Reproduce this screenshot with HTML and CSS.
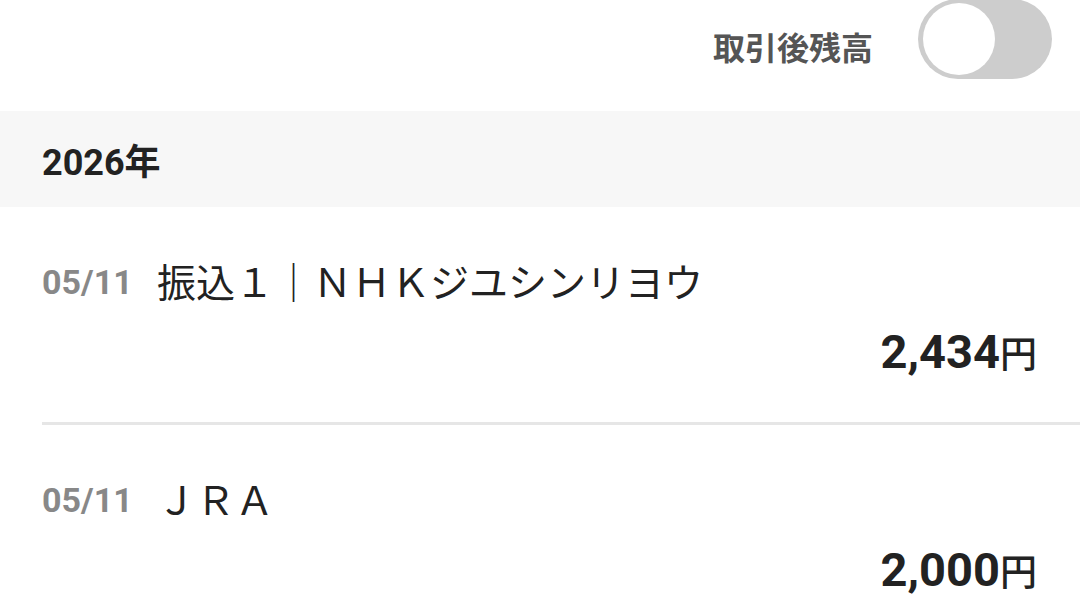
FILE: index.html
```html
<!DOCTYPE html>
<html lang="ja">
<head>
<meta charset="utf-8">
<link rel="stylesheet" href="styles.css">
</head>
<body>
<div class="page">
  <header class="top">
    <span class="top-label">取引後残高</span>
    <div class="toggle"><span class="knob"></span></div>
  </header>
  <div class="year">2026年</div>
  <ul class="list">
    <li class="row">
      <div class="line">
        <span class="date">05/11</span>
        <span class="desc">振込１｜ＮＨＫジユシンリヨウ</span>
      </div>
      <div class="amount">2,434<span class="yen">円</span></div>
    </li>
    <li class="row">
      <div class="line">
        <span class="date">05/11</span>
        <span class="desc desc-jra">ＪＲＡ</span>
      </div>
      <div class="amount">2,000<span class="yen">円</span></div>
    </li>
  </ul>
</div>
</body>
</html>
```
FILE: styles.css
```css
* { box-sizing: border-box; }
html, body { margin: 0; padding: 0; background: #fff; }
body {
  font-family: Roboto, "Noto Sans CJK JP", sans-serif;
  color: #222;
  overflow: hidden;
}
.page { width: 1080px; }
.top {
  height: 111px;
  display: flex;
  justify-content: flex-end;
  align-items: flex-start;
  padding-right: 28px;
  gap: 45px;
}
.top-label {
  font-family: "Noto Sans CJK JP", sans-serif;
  font-weight: 700;
  font-size: 32px;
  line-height: 40px;
  margin-top: 26px;
  color: #555;
}
.toggle {
  position: relative;
  width: 134px;
  height: 80px;
  margin-top: -1px;
  border-radius: 40px;
  background: #cdcdcd;
}
.knob {
  position: absolute;
  left: 5px;
  top: 4px;
  width: 72px;
  height: 72px;
  border-radius: 50%;
  background: #fff;
}
.year {
  height: 96px;
  background: #f7f7f7;
  display: flex;
  align-items: center;
  padding-left: 42px;
  font-size: 36px;
  font-weight: 700;
  color: #222;
}
.list {
  list-style: none;
  margin: 0;
  padding: 0 0 0 42px;
}
.row {
  border-bottom: 3px solid #e6e6e6;
  padding-top: 50px;
  padding-bottom: 40px;
  padding-right: 43px;
}
.line {
  display: flex;
  align-items: center;
  height: 50px;
}
.date {
  font-family: Roboto, sans-serif;
  font-weight: 700;
  font-size: 34px;
  color: #888;
  width: 115px;
}
.desc {
  font-family: "Noto Sans CJK JP", sans-serif;
  font-size: 39px;
  color: #222;
  margin-top: -4px;
}
.amount {
  margin-top: 15px;
  height: 60px;
  line-height: 60px;
  text-align: right;
  font-family: Roboto, sans-serif;
  font-weight: 700;
  font-size: 47px;
  color: #222;
}
.yen {
  font-family: "Noto Sans CJK JP", sans-serif;
  font-weight: 500;
  font-size: 37px;
}
```
